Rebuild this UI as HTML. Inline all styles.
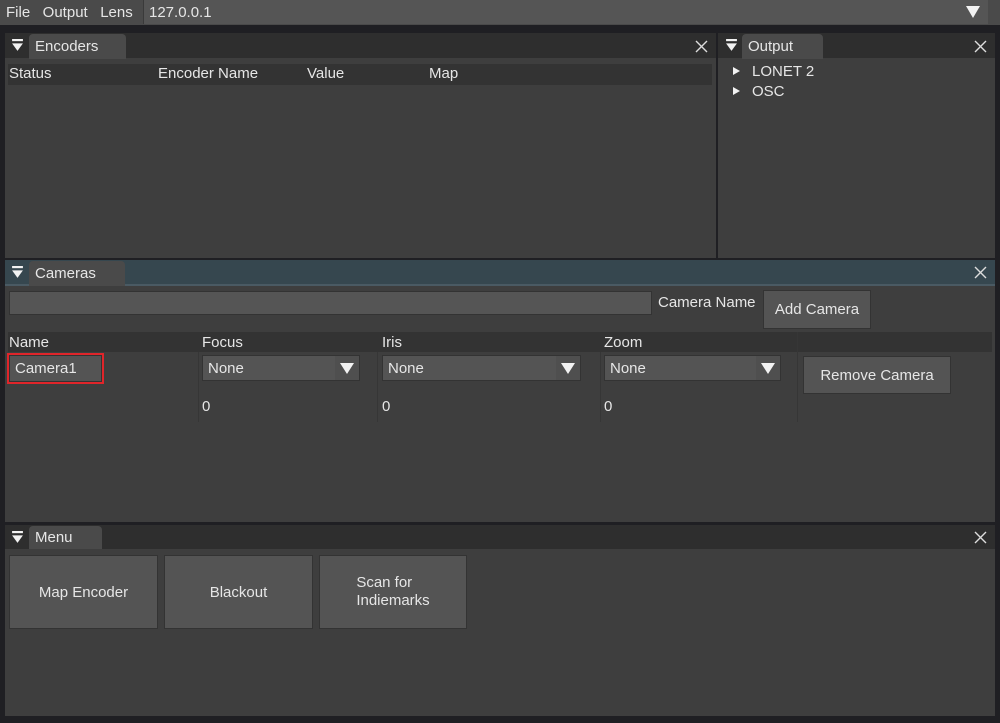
<!DOCTYPE html>
<html><head><meta charset="utf-8"><style>
*{margin:0;padding:0;box-sizing:border-box}
body{width:1000px;height:723px;background:#1f1f23;font-family:"Liberation Sans",sans-serif;font-size:15px;color:#e6e6e6;position:relative;overflow:hidden}
.a{position:absolute}
.tab{position:absolute;background:#4a4a4a;border-radius:4px 4px 0 0;padding:4px 0 0 6px;height:25px}
.tri{position:absolute;width:13px;height:13px}
.x{position:absolute;width:13px;height:13px}
.btn{position:absolute;background:#545454;border:1px solid #333;display:flex;align-items:center;justify-content:center;text-align:center;color:#e6e6e6}
.combo{position:absolute;background:#545454;border:1px solid #333;height:26px;padding:4px 0 0 5px}
.combo .dd{position:absolute;right:0;top:0;width:24px;height:24px;background:#4f4f4f}
.combo .dd:after{content:"";position:absolute;left:5px;top:7px;border-left:7px solid transparent;border-right:7px solid transparent;border-top:11px solid #f2f2f2}
</style></head><body>
<div class="a" style="left:0;top:0;width:1000px;height:25px;background:#4a4a4a"></div>
<div class="a" style="left:6px;top:4px">File&nbsp;&nbsp;&nbsp;Output&nbsp;&nbsp;&nbsp;Lens</div>
<div class="a" style="left:143px;top:0;width:845px;height:24px;background:#555;border-left:1px solid #3a3a3a"></div>
<div class="a" style="left:149px;top:4px">127.0.0.1</div>
<div class="a" style="left:966px;top:6px;border-left:7px solid transparent;border-right:7px solid transparent;border-top:12px solid #f2f2f2"></div>

<div class="a" style="left:5px;top:33px;width:711px;height:25px;background:#2e2e2e"></div>
<div class="a" style="left:5px;top:58px;width:711px;height:200px;background:#3e3e3e"></div>
<svg class="tri" style="left:11px;top:39px" viewBox="0 0 12 12"><rect x="1" y="0" width="10" height="2" fill="#f2f2f2"/><path d="M1 4H11L6 11Z" fill="#f2f2f2"/></svg>
<div class="tab" style="left:29px;top:34px;width:97px">Encoders</div>
<svg class="x" style="left:695px;top:40px" viewBox="0 0 13 13"><path d="M1 1L12 12M12 1L1 12" stroke="#ddd" stroke-width="1.4"/></svg>
<div class="a" style="left:8px;top:64px;width:704px;height:21px;background:#333"></div>
<div class="a" style="left:9px;top:65px">Status</div>
<div class="a" style="left:158px;top:65px">Encoder Name</div>
<div class="a" style="left:307px;top:65px">Value</div>
<div class="a" style="left:429px;top:65px">Map</div>

<div class="a" style="left:718px;top:33px;width:277px;height:25px;background:#2e2e2e"></div>
<div class="a" style="left:718px;top:58px;width:277px;height:200px;background:#3e3e3e"></div>
<svg class="tri" style="left:725px;top:39px" viewBox="0 0 12 12"><rect x="1" y="0" width="10" height="2" fill="#f2f2f2"/><path d="M1 4H11L6 11Z" fill="#f2f2f2"/></svg>
<div class="tab" style="left:742px;top:34px;width:81px">Output</div>
<svg class="x" style="left:974px;top:40px" viewBox="0 0 13 13"><path d="M1 1L12 12M12 1L1 12" stroke="#ddd" stroke-width="1.4"/></svg>
<div class="a" style="left:733px;top:67px;border-top:4px solid transparent;border-bottom:4px solid transparent;border-left:7px solid #f2f2f2"></div>
<div class="a" style="left:752px;top:63px">LONET 2</div>
<div class="a" style="left:733px;top:87px;border-top:4px solid transparent;border-bottom:4px solid transparent;border-left:7px solid #f2f2f2"></div>
<div class="a" style="left:752px;top:83px">OSC</div>

<div class="a" style="left:5px;top:260px;width:990px;height:26px;background:#36474f"></div>
<div class="a" style="left:5px;top:284px;width:990px;height:2px;background:#4a5a63"></div>
<div class="a" style="left:5px;top:286px;width:990px;height:236px;background:#3e3e3e"></div>
<svg class="tri" style="left:11px;top:266px" viewBox="0 0 12 12"><rect x="1" y="0" width="10" height="2" fill="#f2f2f2"/><path d="M1 4H11L6 11Z" fill="#f2f2f2"/></svg>
<div class="tab" style="left:29px;top:261px;width:96px;height:25px">Cameras</div>
<svg class="x" style="left:974px;top:266px" viewBox="0 0 13 13"><path d="M1 1L12 12M12 1L1 12" stroke="#ddd" stroke-width="1.4"/></svg>
<div class="a" style="left:9px;top:291px;width:643px;height:24px;background:#555;border:1px solid #333"></div>
<div class="a" style="left:658px;top:294px">Camera Name</div>
<div class="btn" style="left:763px;top:290px;width:108px;height:39px">Add Camera</div>
<div class="a" style="left:8px;top:332px;width:984px;height:20px;background:#333"></div>
<div class="a" style="left:9px;top:334px">Name</div>
<div class="a" style="left:202px;top:334px">Focus</div>
<div class="a" style="left:382px;top:334px">Iris</div>
<div class="a" style="left:604px;top:334px">Zoom</div>
<div class="a" style="left:198px;top:352px;width:1px;height:70px;background:#363636"></div>
<div class="a" style="left:377px;top:352px;width:1px;height:70px;background:#363636"></div>
<div class="a" style="left:600px;top:352px;width:1px;height:70px;background:#363636"></div>
<div class="a" style="left:797px;top:332px;width:1px;height:90px;background:#363636"></div>
<div class="a" style="left:7px;top:353px;width:97px;height:31px;border:2px solid #e0252a"></div>
<div class="a" style="left:9px;top:355px;width:93px;height:27px;background:#545454;border:1px solid #333;padding:4px 0 0 5px">Camera1</div>
<div class="combo" style="left:202px;top:355px;width:158px">None<div class="dd"></div></div>
<div class="combo" style="left:382px;top:355px;width:199px">None<div class="dd"></div></div>
<div class="combo" style="left:604px;top:355px;width:177px">None<div class="dd"></div></div>
<div class="btn" style="left:803px;top:356px;width:148px;height:38px">Remove Camera</div>
<div class="a" style="left:202px;top:398px">0</div>
<div class="a" style="left:382px;top:398px">0</div>
<div class="a" style="left:604px;top:398px">0</div>

<div class="a" style="left:5px;top:525px;width:990px;height:24px;background:#2e2e2e"></div>
<div class="a" style="left:5px;top:549px;width:990px;height:167px;background:#3e3e3e"></div>
<svg class="tri" style="left:11px;top:531px" viewBox="0 0 12 12"><rect x="1" y="0" width="10" height="2" fill="#f2f2f2"/><path d="M1 4H11L6 11Z" fill="#f2f2f2"/></svg>
<div class="tab" style="left:29px;top:526px;width:73px;height:23px;padding-top:3px">Menu</div>
<svg class="x" style="left:974px;top:531px" viewBox="0 0 13 13"><path d="M1 1L12 12M12 1L1 12" stroke="#ddd" stroke-width="1.4"/></svg>
<div class="btn" style="left:9px;top:555px;width:149px;height:74px">Map Encoder</div>
<div class="btn" style="left:164px;top:555px;width:149px;height:74px">Blackout</div>
<div class="btn" style="left:319px;top:555px;width:148px;height:74px;text-align:left;line-height:18px">Scan for<br>Indiemarks</div>
</body></html>
